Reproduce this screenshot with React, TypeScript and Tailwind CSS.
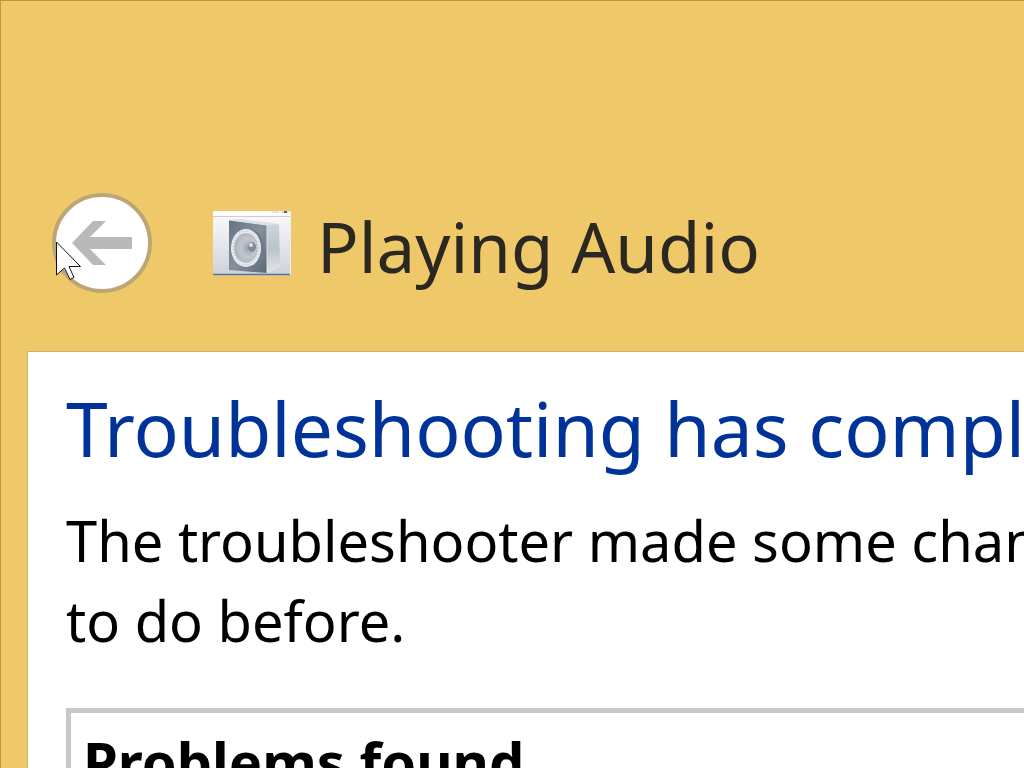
import React from "react";

const SpeakerIcon = () => {
    return (
        <svg width="78" height="65" viewBox="0 0 78 65" aria-hidden="true" className="shrink-0">
            <defs>
                <linearGradient id="back" x1="0" y1="0" x2="0" y2="1">
                    <stop offset="0" stopColor="#fdfdfe" />
                    <stop offset="1" stopColor="#cdd0dc" />
                </linearGradient>
                <linearGradient id="front" x1="0" y1="0" x2="1" y2="1">
                    <stop offset="0" stopColor="#66727f" />
                    <stop offset="0.5" stopColor="#84909b" />
                    <stop offset="1" stopColor="#5d6975" />
                </linearGradient>
                <linearGradient id="side" x1="0" y1="0" x2="0" y2="1">
                    <stop offset="0" stopColor="#cfd5db" />
                    <stop offset="0.5" stopColor="#bac2ca" />
                    <stop offset="1" stopColor="#e3e7eb" />
                </linearGradient>
                <radialGradient id="cone" cx="0.6" cy="0.5" r="0.6">
                    <stop offset="0" stopColor="#9aa4ae" />
                    <stop offset="0.5" stopColor="#c0c7cd" />
                    <stop offset="1" stopColor="#aab3bb" />
                </radialGradient>
            </defs>
            <rect width="78" height="65" fill="url(#back)" />
            <rect y="5" width="78" height="1" fill="#d9c9c4" />
            <path d="M59 1h7M68 1h8" stroke="#c9c4cc" />
            <path d="M71 0h3v2h-3z" fill="#6d5560" />
            <path d="M16 9 L28 8 L67 13 L55 14 Z" fill="#dde2e6" />
            <path d="M54 14 L66 13 L67 56 L54 62 Z" fill="url(#side)" />
            <path d="M16 9 L54 14 L54 62 L16 59 Z" fill="url(#front)" />
            <path d="M16 9 L54 14 L54 62" fill="none" stroke="#dfe4e8" />
            <ellipse cx="36" cy="37" rx="15" ry="19" fill="#6f7b87" />
            <ellipse cx="33" cy="37" rx="15" ry="19" fill="#e8ecef" />
            <ellipse cx="33" cy="37" rx="13" ry="17" fill="none" stroke="#a5aeb7" strokeDasharray="1 2" />
            <ellipse cx="33" cy="37" rx="12" ry="15" fill="url(#cone)" />
            <ellipse cx="39" cy="36" rx="4" ry="5" fill="#808b96" />
            <ellipse cx="38" cy="34" rx="2" ry="2" fill="#dfe4e8" />
            <path d="M0 63.5h78" stroke="#66717a" strokeWidth="1.5" />
            <path d="M77.5 0v64" stroke="#eceef1" />
        </svg>
    );
};

const Pointer = () => {
    return (
        <svg width="26" height="40" viewBox="0 0 26 40" aria-hidden="true" className="absolute top-12 left-1">
            <path d="M0.5 1 L0.5 34 L8.5 27 L14 38.5 L18 36.5 L13 25.5 L24.5 25.5 Z" fill="#fff" stroke="#111" />
        </svg>
    );
};

const App = () => {
    return (
        <div className="flex flex-col h-screen overflow-hidden bg-[#efc969] border-t border-l border-[#bd963b] font-['Noto_Sans','Open_Sans',sans-serif]">
            <header className="flex items-center pt-48 pl-[51px] pb-[58px]">
                <div className="relative shrink-0">
                    <button
                        type="button"
                        aria-label="Back"
                        className="flex items-center justify-center size-25 rounded-full border-4 border-[#bda676] bg-white"
                    >
                        <svg width="60" height="46" viewBox="0 0 60 46" aria-hidden="true">
                            <path d="M0 23 L21 1 L34 1 L18 17 L60 17 L60 29 L18 29 L34 45 L21 45 Z" fill="#b9b9b9" />
                        </svg>
                    </button>
                    <Pointer />
                </div>
                <div className="flex items-center gap-[26px] ml-[61px]">
                    <SpeakerIcon />
                    <h1 className="pt-1.5 text-[69px] leading-[80px] text-[#2b2822] whitespace-nowrap">Playing Audio</h1>
                </div>
            </header>

            <main className="flex-1 min-h-0 ml-[26px] pt-7 pl-[38px] overflow-hidden bg-white border-t border-l border-[#cdb16a]">
                <h2 className="text-[75px] leading-[96px] text-[#003399] whitespace-nowrap">
                    Troubleshooting has completed
                </h2>
                <p className="mt-6 text-[56px] leading-[80px] text-black whitespace-nowrap">
                    The troubleshooter made some changes
                    <br />
                    to do before.
                </p>
                <section className="mt-12 pt-2 pl-3 border-t-5 border-l-5 border-[#c8c8c8]">
                    <h3 className="text-[56px] leading-[80px] font-bold text-black whitespace-nowrap">Problems found</h3>
                </section>
            </main>
        </div>
    );
};
export default App;
